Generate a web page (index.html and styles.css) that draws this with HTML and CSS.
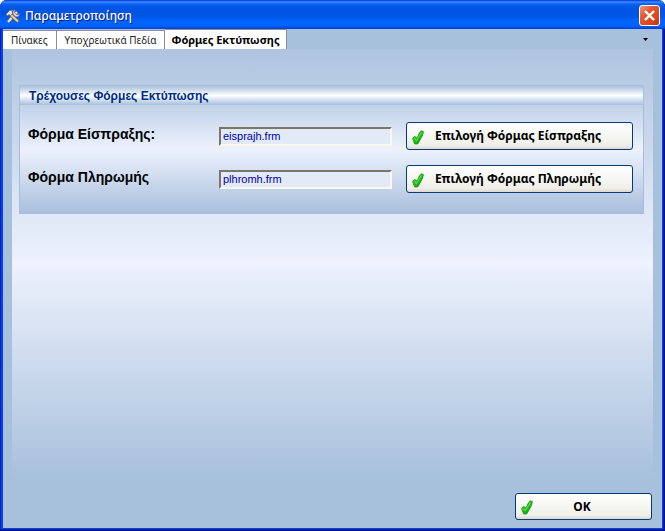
FILE: index.html
```html
<!DOCTYPE html>
<html lang="el">
<head>
<meta charset="utf-8">
<title>Παραμετροποίηση</title>
<link rel="stylesheet" href="styles.css">
</head>
<body>
<svg class="defs" aria-hidden="true">
  <defs>
    <linearGradient id="green" x1="0" y1="0" x2="1" y2="1">
      <stop offset="0" stop-color="#4be636"/>
      <stop offset="1" stop-color="#058a08"/>
    </linearGradient>
    <symbol id="check" viewBox="0 0 12 15">
      <path d="M.6 8.4 2.4 6.4 4.4 7.4 5 8.2 7.2 3.2 9.2 .8 11.4 1.6 10.6 5 8.2 9.8 5.6 14 2.6 14Z" fill="url(#green)" stroke="#149414" stroke-width=".8"/>
      <path d="M2.2 8.2 4.4 10.6 9.6 2.2" fill="none" stroke="#4be634" stroke-width="1.2"/>
    </symbol>
  </defs>
</svg>
<div class="window">
  <header class="titlebar">
    <svg class="app-icon" viewBox="0 0 16 16" aria-hidden="true">
      <path d="M3 14 12 4" stroke="#5b5f68" stroke-width="3.6"/>
      <path d="M3 14 12 4" stroke="#e7e2d4" stroke-width="2.2"/>
      <path d="M10 1.5 9.6 5 12 7 15 5.6 13.3 8.8 10.6 8.8 8 6 8 3Z" fill="#d9dbe0" stroke="#666b76" stroke-width=".6"/>
      <path d="M5.5 6.5 13.5 14" stroke="#6a5d4d" stroke-width="3.6"/>
      <path d="M6 7 13 13.6" stroke="#e8d0a8" stroke-width="2"/>
      <path d="M1 6.2 4.5 2.4 8.5 2 7 3.8 7.8 5.2 5.4 7.8 4 6.6 2.4 8Z" fill="#e4e4e0" stroke="#55585f" stroke-width=".7"/>
    </svg>
    <h1 class="title">Παραμετροποίηση</h1>
    <button class="close" type="button" aria-label="Κλείσιμο">
      <svg viewBox="0 0 17 17" aria-hidden="true"><path d="M4 4 13 13M13 4 4 13" stroke="#fff" stroke-width="2.4"/></svg>
    </button>
  </header>
  <main class="client">
    <nav class="tabs" role="tablist">
      <button class="tab" type="button" role="tab" aria-selected="false">Πίνακες</button>
      <button class="tab" type="button" role="tab" aria-selected="false">Υποχρεωτικά Πεδία</button>
      <button class="tab active" type="button" role="tab" aria-selected="true">Φόρμες Εκτύπωσης</button>
      <button class="tab-menu" type="button" aria-label="Καρτέλες">
        <svg viewBox="0 0 5 3" aria-hidden="true"><path d="M0 0H5L2.5 3Z"/></svg>
      </button>
    </nav>
    <section class="page" role="tabpanel">
      <div class="group">
        <h2 class="group-title">Τρέχουσες Φόρμες Εκτύπωσης</h2>
        <div class="rows">
          <label class="label" for="receipt">Φόρμα Είσπραξης:</label>
          <input class="field" id="receipt" type="text" value="eisprajh.frm">
          <button class="button" type="button"><svg class="check" aria-hidden="true"><use href="#check"/></svg><span>Επιλογή Φόρμας Είσπραξης</span></button>
          <label class="label" for="payment">Φόρμα Πληρωμής</label>
          <input class="field" id="payment" type="text" value="plhromh.frm">
          <button class="button" type="button"><svg class="check" aria-hidden="true"><use href="#check"/></svg><span>Επιλογή Φόρμας Πληρωμής</span></button>
        </div>
      </div>
    </section>
    <footer class="footer">
      <button class="button ok" type="button"><svg class="check" aria-hidden="true"><use href="#check"/></svg><span>OK</span></button>
    </footer>
  </main>
</div>
</body>
</html>
```

FILE: styles.css
```css
* { box-sizing: border-box; }

body {
  margin: 0;
  background: #fff;
  font-family: "Liberation Sans", Arial, sans-serif;
  font-size: 12px;
}

button { font: inherit; margin: 0; padding: 0; }

.defs { position: absolute; width: 0; height: 0; }

.window {
  display: flex;
  flex-direction: column;
  min-height: 100vh;
  padding: 0 3px 3px;
  border-radius: 7px 7px 0 0;
  background: #0047e8;
  box-shadow: inset -1px -1px #00138c, inset 1px 0 #0019cf, inset -2px -2px #001ea0;
}

.titlebar {
  display: flex;
  align-items: center;
  height: 29px;
  margin: 0 -3px;
  padding: 2px 5px 0;
  border-radius: 7px 7px 0 0;
  background: linear-gradient(#0831d9 0, #3a8cff 2px, #0a62f0 4px, #0054e3 8px, #0055e5 16px, #0066ff 22px, #0062fa 26px, #003dd0 29px);
}

.app-icon { width: 16px; height: 16px; }

.title {
  flex: 1;
  margin: 0 0 0 4px;
  padding-top: 1px;
  color: #fff;
  font: 500 12px/20px "Noto Sans", sans-serif;
  text-shadow: 1px 1px #0a1883;
}

.close {
  width: 21px;
  height: 21px;
  border: 1px solid #fff;
  border-radius: 3px;
  background: linear-gradient(135deg, #f0987f, #e35a35 35%, #d9431a 75%, #b93010);
}

.close svg { display: block; width: 17px; height: 17px; margin: 1px; }

.client {
  display: flex;
  flex: 1;
  flex-direction: column;
  background: #a7c0dc;
}

.tabs {
  display: flex;
  align-items: flex-end;
  height: 20px;
}

.tab {
  height: 19px;
  padding: 0 8px;
  border: solid #8b8e98;
  border-width: 1px 1px 0 0;
  background: #fff;
  color: #222;
  font: 10px/18px "Noto Sans", sans-serif;
}

.tab.active {
  height: 20px;
  padding: 0 6px;
  color: #000;
  font-size: 11px;
  font-weight: 700;
}

.tab-menu {
  width: 13px;
  height: 20px;
  margin: 0 10px 0 auto;
  border: 0;
  background: none;
}

.tab-menu svg { display: block; width: 5px; height: 3px; margin: 0 auto; }

.page {
  flex: 1;
  margin: 0 9px;
  padding: 36px 9px 0 7px;
  background: linear-gradient(#afc4e0, #edf2fd 50%, #a8c0dc);
}

.group {
  border: 1px solid #a7bfdc;
  background: linear-gradient(#aec4df, #edf2fd 50%, #a9bfdc);
}

.group-title {
  margin: 0;
  padding: 1px 9px 0;
  background: linear-gradient(#a9c1dd, #fdfeff 50%, #a7bfdc);
  color: #002d83;
  font: 700 12px/18px "Liberation Sans", sans-serif;
}

.rows {
  display: grid;
  grid-template-columns: 177px 173px 1fr;
  row-gap: 15px;
  column-gap: 14px;
  align-items: center;
  padding: 17px 10px 20px 8px;
}

.label {
  padding-bottom: 4px;
  font: 700 14px/20px "Liberation Sans", sans-serif;
}

.field {
  width: 100%;
  height: 19px;
  padding: 0 2px;
  border: 2px solid;
  border-color: #79766c #fbf8f0 #fbf8f0 #79766c;
  border-radius: 0;
  background: #e3eaf7;
  color: #0000a8;
  font: 11px/15px "Liberation Sans", sans-serif;
}

.button {
  display: flex;
  align-items: center;
  width: 100%;
  height: 28px;
  padding: 0 20px 0 5px;
  border: 1px solid #003c74;
  border-radius: 3px;
  background: linear-gradient(#fff, #f4f4f0 60%, #efeee8 86%, #dcd8cf);
  color: #000;
  font: 700 12px/16px "Noto Sans", sans-serif;
}

.button span { flex: 1; text-align: center; }

.check { width: 12px; height: 15px; margin-top: 2px; }

.footer {
  display: flex;
  justify-content: flex-end;
  padding: 15px 10px 8px;
}

.ok { width: 137px; height: 27px; }
```
